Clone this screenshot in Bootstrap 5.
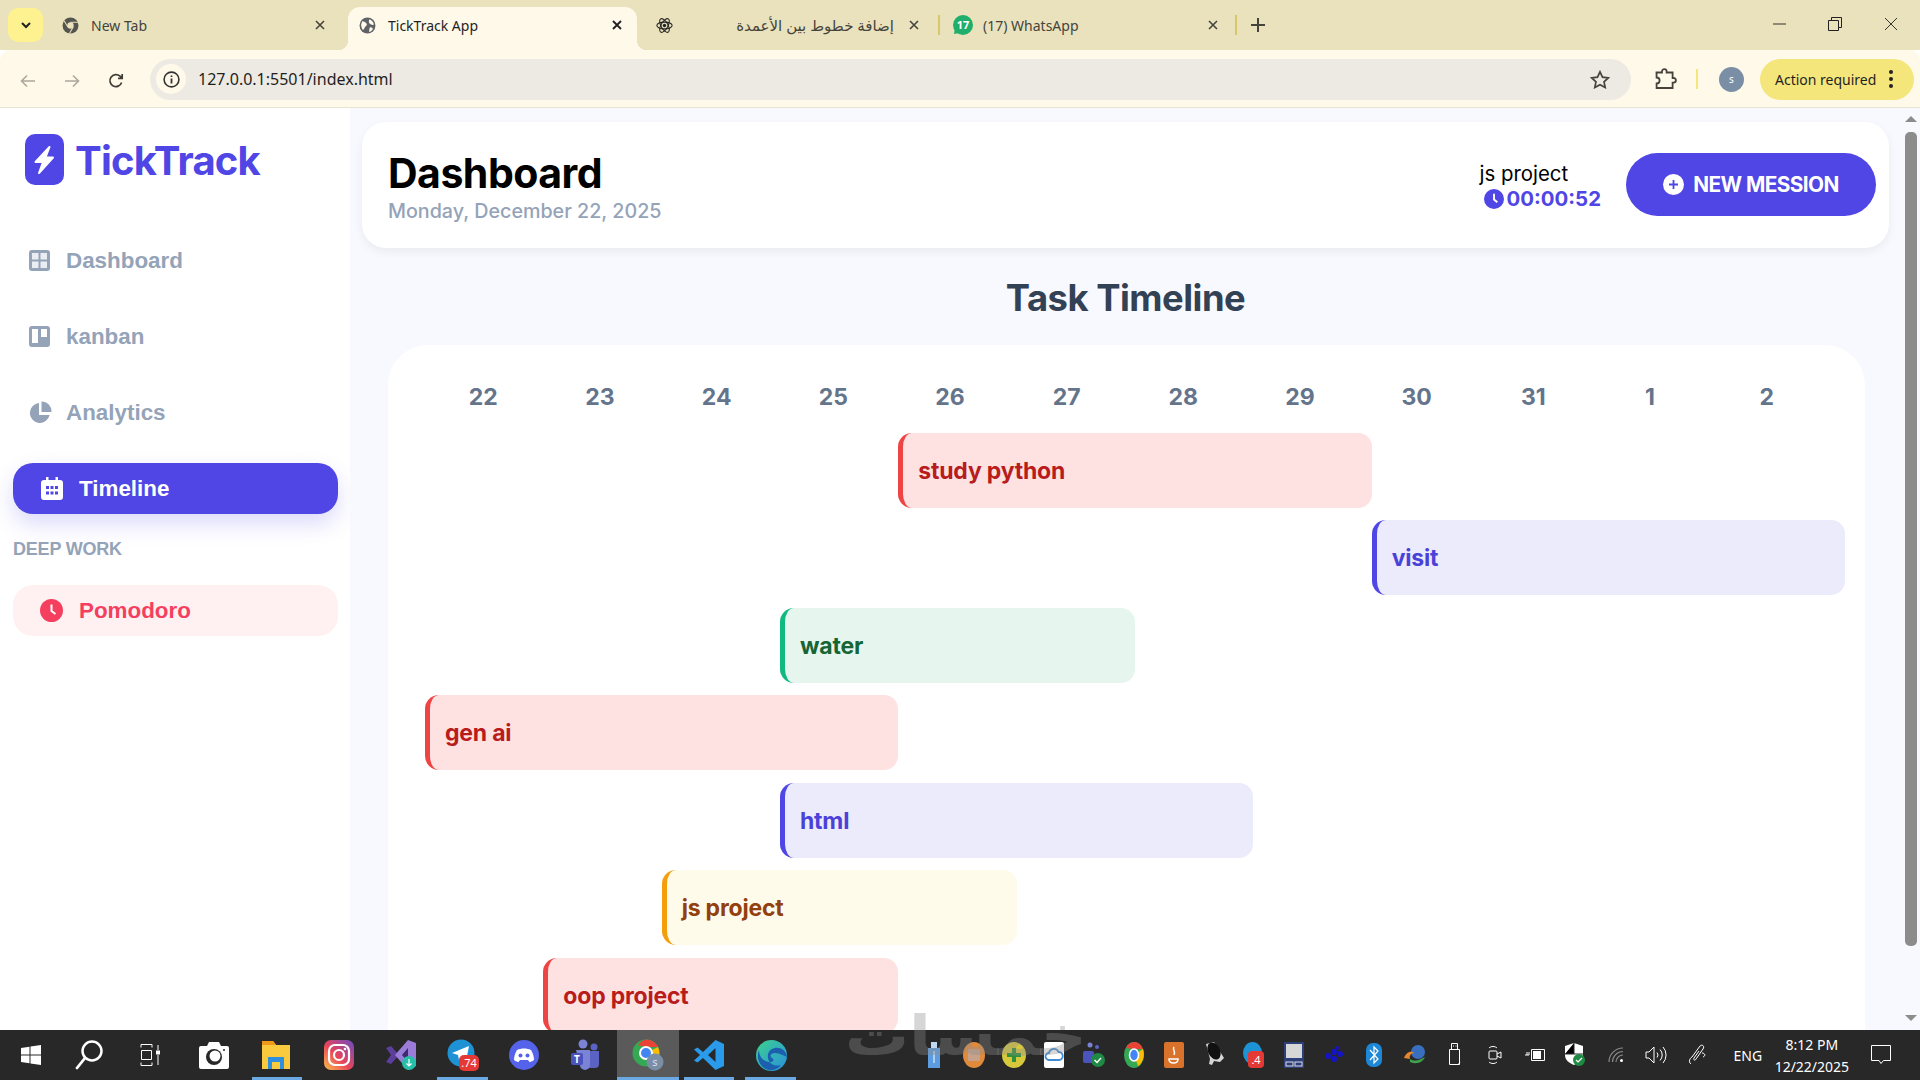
<!DOCTYPE html>
<html lang="en">
  <head>
    <meta charset="UTF-8" />
    <meta name="viewport" content="width=device-width, initial-scale=1.0" />
    <title>TickTrack App</title>
    <link
      rel="stylesheet"
      href="https://cdn.jsdelivr.net/npm/bootstrap@5.3.0/dist/css/bootstrap.min.css"
    />
    <style>
      body { font-family: "Inter", "Noto Sans", sans-serif; background: #fff; position: relative; }

      /* browser chrome */
      .tb-strip { height: 50px; background: #e9e2bc; font-family: "Noto Sans", "DejaVu Sans", sans-serif; font-size: 14px; color: #45443c; padding-left: 8px; }
      .tb-chevron { width: 35px; height: 34px; margin-top: 8px; margin-right: 8px; background: #fdf28f; border-radius: 10px; }
      .tb-tabs { gap: 8px; }
      .tb-tab { width: 289px; height: 43px; margin-top: 7px; padding: 0 10px 7px 11px; position: relative; }
      .tb-tab-on { background: #fff9ea; border-radius: 12px 12px 0 0; color: #1f1f1f; }
      .tb-tab-on::before, .tb-tab-on::after { content: ""; position: absolute; bottom: 0; width: 10px; height: 10px; background: radial-gradient(circle at 0 0, transparent 10px, #fff9ea 10.5px); }
      .tb-tab-on::before { left: -10px; }
      .tb-tab-on::after { right: -10px; background: radial-gradient(circle at 100% 0, transparent 10px, #fff9ea 10.5px); }
      .tb-tab-sep::after { content: ""; position: absolute; right: -6px; top: 8px; width: 2px; height: 20px; background: #d6c868; }
      .tb-fav { width: 17px; height: 17px; flex: none; margin-right: 12px; }
      .tb-fav-wa { width: 20px; height: 20px; margin-right: 10px; }
      .tb-title { flex: 1 1 auto; min-width: 0; white-space: nowrap; overflow: hidden; }
      .tb-title-ar { padding-left: 10px; margin-right: 10px; font-size: 15px; }
      .tb-x { width: 20px; flex: none; }
      .tb-x-wa { margin-right: -2px; }
      .tb-sep { width: 2px; height: 20px; background: #d6c868; margin: 15px 0 0 4px; }
      .tb-plus { margin: 18px 0 0 14px; }
      .tb-win-group { margin-right: 1px; }
      .tb-win { width: 56px; height: 48px; }
      .tb-tools { height: 58px; padding-top: 2px; background: #fff9ea; border-bottom: 1px solid #e8e4d4; border-radius: 10px 10px 0 0; position: relative; font-family: "Noto Sans", sans-serif; }
      .tb-tools-nav { padding-left: 6px; }
      .tb-nav { width: 44px; }
      .tb-omni { width: 1481px; height: 41px; background: #edeae3; border-radius: 21px; font-size: 16px; color: #1f1f1f; margin-left: 12px; padding-left: 6px; padding-right: 21px; }
      .tb-info { width: 30px; height: 30px; border-radius: 50%; background: #fff9ea; margin-right: 12px; }
      .tb-puzzle { margin-left: 23px; }
      .tb-divider { width: 2px; height: 20px; background: #f5e67c; margin: 0 21px 0 18px; }
      .tb-avatar { width: 25px; height: 25px; background: #7a8fa6; color: #fff; border-radius: 50%; font-size: 10px; }
      .tb-action { width: 154px; height: 41px; background: #f5e67c; border-radius: 21px; font-size: 14px; color: #1f1f1f; padding-left: 15px; margin-left: 16px; }
      .tb-action svg { margin-left: 12px; }

      /* sidebar */
      .tt-side { width: 350px; flex: none; padding: 26px 12px 0 13px; background: #fff; font-family: "Liberation Sans", Arial, sans-serif; }
      .tt-logo { margin-left: 12px; margin-bottom: 50px; gap: 11px; height: 51px; }
      .tt-logo span { font-family: "Inter", sans-serif; font-weight: 700; font-size: 40px; color: #4f46e5; letter-spacing: -0.8px; position: relative; top: 2px; }
      .tt-link { height: 51px; margin-bottom: 25px; padding-left: 16px; gap: 16px; border-radius: 20px; color: #94a3b8; font-weight: 700; font-size: 22.4px; text-decoration: none; }
      .tt-link-pie svg { margin-right: -2px; }
      .tt-link-on { background: #4f46e5; color: #fff; padding-left: 28px; box-shadow: 0 10px 22px rgba(79, 70, 229, 0.2); margin-bottom: 21px; }
      .tt-link-red { background: #fff1f2; color: #f43f5e; padding-left: 27px; }
      .tt-group { font-size: 18px; font-weight: 700; color: #94a3b8; line-height: 28px; margin-bottom: 22px; letter-spacing: -0.2px; }

      /* main */
      .tt-main { flex: 1 1 auto; min-width: 0; background: #f8f9fe; padding: 14px 13px 0 12px; overflow: hidden; }
      .tt-head { height: 126px; background: #fff; border-radius: 24px; padding: 0 13px 0 26px; box-shadow: 0 4px 10px rgba(15, 23, 42, 0.06); }
      .tt-headline { padding-top: 2px; }
      .tt-h1 { font-size: 41px; font-weight: 700; color: #000; line-height: 50px; letter-spacing: -0.5px; margin: 0; }
      .tt-date { font-size: 19.7px; font-weight: 500; color: #94a3b8; line-height: 26px; }
      .tt-running { font-size: 20.4px; color: #000; line-height: 26px; margin-right: 25px; padding-top: 3px; }
      .tt-clock { font-weight: 700; color: #4f46e5; font-size: 20.4px; line-height: 24px; gap: 3px; margin-left: 4px; }
      .tt-new { width: 250px; height: 63px; border-radius: 32px; background: #4f46e5; color: #fff; font-weight: 700; font-size: 20.8px; letter-spacing: -0.6px; border: 0; gap: 9px; margin-bottom: 1px; padding-left: 6px; }
      .tt-h2 { font-size: 36.4px; font-weight: 700; color: #334155; text-align: center; line-height: 50px; margin: 25px 0 22px; letter-spacing: -0.5px; }
      .tt-board { margin: 0 24px 0 26px; background: #fff; border-radius: 40px 40px 0 0; padding: 36px 20px 0 37px; }
      .tt-days { display: grid; grid-template-columns: repeat(12, 1fr); padding-right: 20px; margin-bottom: 20px; text-align: center; font-weight: 700; font-size: 23px; line-height: 32px; color: #64748b; }
      .tt-bars { display: grid; grid-template-columns: repeat(12, 1fr); row-gap: 12.5px; grid-auto-rows: 75px; }
      .tt-bar { border-radius: 14px; border-left: 5px solid; padding: 1px 0 0 15px; font-weight: 700; font-size: 23px; display: flex; align-items: center; letter-spacing: -0.2px; }
      .tt-red { background: #fee2e2; border-color: #ef4444; color: #b91c1c; }
      .tt-blue { background: #ebebfb; border-color: #4f46e5; color: #4a41d8; }
      .tt-green { background: #e6f6ef; border-color: #10b981; color: #166534; }
      .tt-amber { background: #fffbeb; border-color: #f59e0b; color: #92400e; }

      .tt-scroll { width: 18px; flex: none; background: #f8f9fe; padding: 0 3px; }
      .tt-scroll i { display: block; width: 0; height: 0; margin: 8px auto 0; border: 6px solid transparent; border-top: 0; border-bottom: 6px solid #8c8c8c; }
      .tt-scroll i.tt-down { margin-top: 69px; border-bottom: 0; border-top: 6px solid #8c8c8c; }
      .tt-thumb { height: 814px; margin: 10px 0 0; background: #8c8c8c; border-radius: 5px; }

      /* taskbar */
      .os-bar { height: 50px; background: #282828; position: relative; z-index: 1; color: #fff; font-family: "Noto Sans", sans-serif; }
      .os-cell { width: 61.7px; height: 50px; flex: none; position: relative; }
      .os-open::after { content: ""; position: absolute; left: 5px; right: 6px; bottom: 0; height: 3px; background: #6aa9e4; }
      .os-cur { background: #5a5a5a; }
      .os-cur::after { left: 0; right: 0; }
      .os-tray { margin-left: 112px; }
      .os-mini { width: 40.05px; height: 50px; flex: none; }
      .os-wifi { margin-left: 1px; }
      .os-lang { font-size: 14px; width: 52px; flex: none; margin-left: 6px; }
      .os-time { font-size: 14px; line-height: 22px; text-align: center; width: 94px; flex: none; margin-left: -9px; padding-top: 2px; }
      .os-note { margin-left: 12px; }

      /* overlay watermark */
      .wm { position: absolute; left: 845px; top: 1006px; z-index: 2; font-family: "DejaVu Sans", sans-serif; font-weight: 700; font-size: 55px; line-height: 60px; color: rgba(140, 140, 140, 0.36); pointer-events: none; transform: scaleX(1.16); transform-origin: 0 50%; }
    </style>
  </head>
  <body class="d-flex flex-column vh-100 overflow-hidden">
    <div class="tb-strip d-flex">
      <div class="tb-chevron d-flex align-items-center justify-content-center">
        <svg width="12" height="8" viewBox="0 0 12 8"><path d="M2 2l4 4 4-4" fill="none" stroke="#222" stroke-width="2"/></svg>
      </div>
      <div class="tb-tabs d-flex">
        <div class="tb-tab d-flex align-items-center">
          <svg class="tb-fav" viewBox="0 0 16 16"><circle cx="8" cy="8" r="7.5" fill="#55554f"/><circle cx="8" cy="8" r="3" fill="#e9e2bc"/><path d="M8 5h7M5.5 9.5L2 3.5M10.5 9.5L7 15.5" stroke="#e9e2bc" stroke-width="1"/></svg>
          <span class="tb-title">New Tab</span>
          <svg class="tb-x" height="10" viewBox="0 0 20 10"><path d="M6 1l8 8M14 1l-8 8" stroke="#45443c" stroke-width="1.6"/></svg>
        </div>
        <div class="tb-tab tb-tab-on d-flex align-items-center">
          <svg class="tb-fav" viewBox="0 0 16 16"><circle cx="8" cy="8" r="7.5" fill="#5f6368"/><path d="M3 4c2 0 3 1 4 2s0 2-1 3-1 3-2 3-2-3-2-5zM10 2c2 1 4 3 4 5-1 1-3 0-4-1s-1-3 0-4zM10 10c1-1 3 0 3 1s-2 3-3 3 0-3 0-4z" fill="#fff9ea"/></svg>
          <span class="tb-title">TickTrack App</span>
          <svg class="tb-x" height="10" viewBox="0 0 20 10"><path d="M6 1l8 8M14 1l-8 8" stroke="#1f1f1f" stroke-width="1.8"/></svg>
        </div>
        <div class="tb-tab tb-tab-sep d-flex align-items-center">
          <svg class="tb-fav" viewBox="0 0 16 16"><g fill="none" stroke="#222" stroke-width="1"><ellipse cx="8" cy="8" rx="7.2" ry="3.2"/><ellipse cx="8" cy="8" rx="7.2" ry="3.2" transform="rotate(60 8 8)"/><ellipse cx="8" cy="8" rx="7.2" ry="3.2" transform="rotate(120 8 8)"/></g><circle cx="8" cy="8" r="1.6" fill="#222"/></svg>
          <span class="tb-title tb-title-ar" dir="rtl">إضافة خطوط بين الأعمدة</span>
          <svg class="tb-x" height="10" viewBox="0 0 20 10"><path d="M6 1l8 8M14 1l-8 8" stroke="#45443c" stroke-width="1.6"/></svg>
        </div>
        <div class="tb-tab d-flex align-items-center">
          <svg class="tb-fav tb-fav-wa" viewBox="0 0 20 20"><circle cx="10" cy="10" r="10" fill="#1fae6b"/><path d="M1 19l1-6 4 5z" fill="#1fae6b"/><text x="10" y="14" text-anchor="middle" font-size="11" font-weight="700" fill="#fff" font-family="Noto Sans">17</text></svg>
          <span class="tb-title">(17) WhatsApp</span>
          <svg class="tb-x tb-x-wa" height="10" viewBox="0 0 20 10"><path d="M6 1l8 8M14 1l-8 8" stroke="#45443c" stroke-width="1.6"/></svg>
        </div>
      </div>
      <div class="tb-sep"></div>
      <svg class="tb-plus" width="14" height="14" viewBox="0 0 14 14"><path d="M7 0v14M0 7h14" stroke="#45443c" stroke-width="2"/></svg>
      <div class="tb-win-group ms-auto d-flex">
        <div class="tb-win d-flex align-items-center justify-content-center"><svg width="13" height="2" viewBox="0 0 13 2"><path d="M0 1h13" stroke="#333"/></svg></div>
        <div class="tb-win d-flex align-items-center justify-content-center"><svg width="14" height="14" viewBox="0 0 14 14"><path d="M.5 3.5h10v10H.5zM3.5 3.5v-3h10v10h-3" fill="none" stroke="#222"/></svg></div>
        <div class="tb-win d-flex align-items-center justify-content-center"><svg width="14" height="14" viewBox="0 0 14 14"><path d="M1 1l12 12M13 1L1 13" stroke="#333"/></svg></div>
      </div>
    </div>

    <div class="tb-tools d-flex align-items-center">
      <div class="tb-tools-nav d-flex align-items-center">
        <div class="tb-nav text-center"><svg width="16" height="14" viewBox="0 0 16 14"><path d="M15 7H2M7 1.5L1.5 7 7 12.5" fill="none" stroke="#aba89c" stroke-width="1.6"/></svg></div>
        <div class="tb-nav text-center"><svg width="16" height="14" viewBox="0 0 16 14"><path d="M1 7h13M9 1.5L14.5 7 9 12.5" fill="none" stroke="#aba89c" stroke-width="1.6"/></svg></div>
        <div class="tb-nav text-center"><svg width="16" height="16" viewBox="0 0 16 16"><path d="M13.6 9.5A6 6 0 1 1 12 3.2L14 5M14.2 1v4.3H10" fill="none" stroke="#3f3e36" stroke-width="1.7"/></svg></div>
      </div>
      <div class="tb-omni d-flex align-items-center">
        <div class="tb-info d-flex align-items-center justify-content-center"><svg width="17" height="17" viewBox="0 0 17 17"><circle cx="8.5" cy="8.5" r="7.4" fill="none" stroke="#333" stroke-width="1.6"/><path d="M8.5 7.5v5M8.5 4.5v1.6" stroke="#333" stroke-width="1.8"/></svg></div>
        <span>127.0.0.1:5501/index.html</span>
        <svg class="ms-auto" width="20" height="19" viewBox="0 0 20 19"><path d="M10 1.8l2.5 5.3 5.8.7-4.3 4 1.2 5.7L10 14.7l-5.2 2.8L6 11.8l-4.3-4 5.8-.7z" fill="none" stroke="#45443c" stroke-width="1.7"/></svg>
      </div>
      <svg class="tb-puzzle" width="24" height="24" viewBox="0 0 24 24"><path d="M2.5 5.5h5.5v-1a2.3 2.3 0 0 1 4.6 0v1h6v5.5h1a2.3 2.3 0 0 1 0 4.6h-1v5.4h-16v-4.500a2.6 2.6 0 0 0 0-6z" fill="none" stroke="#45443c" stroke-width="1.8"/></svg>
      <div class="tb-divider"></div>
      <div class="tb-avatar d-flex align-items-center justify-content-center">s</div>
      <div class="tb-action d-flex align-items-center">
        <span>Action required</span>
        <svg width="6" height="20" viewBox="0 0 6 20"><circle cx="3" cy="3" r="2" fill="#222"/><circle cx="3" cy="10" r="2" fill="#222"/><circle cx="3" cy="17" r="2" fill="#222"/></svg>
      </div>
    </div>

    <div class="d-flex flex-grow-1 overflow-hidden">
      <aside class="tt-side">
        <div class="tt-logo d-flex align-items-center">
          <svg width="39" height="51" viewBox="0 0 39 51"><rect width="39" height="51" rx="10" fill="#4f46e5"/><path d="M24.5 13L10.5 28h7.5L14 39l14-15.5h-7.5z" fill="#fff" stroke="#fff" stroke-width="2" stroke-linejoin="round"/></svg>
          <span>TickTrack</span>
        </div>
        <a class="tt-link d-flex align-items-center" href="#">
          <svg width="21" height="21" viewBox="0 0 21 21"><rect width="21" height="21" rx="3" fill="#94a3b8"/><path d="M3 3h6.5v6.5H3zM11.5 3H18v6.5h-6.5zM3 11.5h6.5V18H3zM11.5 11.5H18V18h-6.5z" fill="#fff" opacity=".8"/></svg>
          Dashboard
        </a>
        <a class="tt-link d-flex align-items-center" href="#">
          <svg width="21" height="21" viewBox="0 0 21 21"><rect width="21" height="21" rx="3" fill="#94a3b8"/><path d="M3 3h6v14H3zM12 3h6v8h-6z" fill="#fff"/></svg>
          kanban
        </a>
        <a class="tt-link tt-link-pie d-flex align-items-center" href="#">
          <svg width="23" height="23" viewBox="0 0 23 23"><path d="M10 2a10 10 0 1 0 10.6 12H10z" fill="#94a3b8"/><path d="M12.5 0.5a10 10 0 0 1 10 10.5h-10z" fill="#94a3b8"/></svg>
          Analytics
        </a>
        <a class="tt-link tt-link-on d-flex align-items-center" href="#">
          <svg width="22" height="23" viewBox="0 0 22 23"><path d="M5 0h2.5v3h7V0H17v3h2a3 3 0 0 1 3 3v14a3 3 0 0 1-3 3H3a3 3 0 0 1-3-3V6a3 3 0 0 1 3-3h2z" fill="#fff"/><g fill="#4f46e5"><rect x="5" y="9" width="3" height="3"/><rect x="9.5" y="9" width="3" height="3"/><rect x="14" y="9" width="3" height="3"/><rect x="5" y="14.500" width="3" height="3"/><rect x="9.5" y="14.500" width="3" height="3"/><rect x="14" y="14.500" width="3" height="3"/></g></svg>
          Timeline
        </a>
        <div class="tt-group">DEEP WORK</div>
        <a class="tt-link tt-link-red d-flex align-items-center" href="#">
          <svg width="23" height="23" viewBox="0 0 23 23"><circle cx="11.500" cy="11.500" r="11.500" fill="#f43f5e"/><path d="M11.500 5.500v6.500l4 3" fill="none" stroke="#fff" stroke-width="2"/></svg>
          Pomodoro
        </a>
      </aside>

      <main class="tt-main">
        <header class="tt-head d-flex align-items-center">
          <div class="tt-headline flex-grow-1">
            <h1 class="tt-h1">Dashboard</h1>
            <div class="tt-date">Monday, December 22, 2025</div>
          </div>
          <div class="tt-running">
            <div>js project</div>
            <div class="tt-clock d-flex align-items-center">
              <svg width="20" height="20" viewBox="0 0 21 21"><circle cx="10.500" cy="10.500" r="10.500" fill="#4f46e5"/><path d="M10.500 5v6l3.500 3" fill="none" stroke="#fff" stroke-width="2"/></svg>
              00:00:52
            </div>
          </div>
          <button class="tt-new d-flex align-items-center justify-content-center" type="button">
            <svg width="21" height="21" viewBox="0 0 21 21"><circle cx="10.500" cy="10.500" r="10.500" fill="#fff"/><path d="M10.500 6v9M6 10.500h9" stroke="#4f46e5" stroke-width="1.800"/></svg>
            NEW MESSION
          </button>
        </header>

        <h2 class="tt-h2">Task Timeline</h2>

        <section class="tt-board">
          <div class="tt-days">
            <div>22</div><div>23</div><div>24</div><div>25</div><div>26</div><div>27</div>
            <div>28</div><div>29</div><div>30</div><div>31</div><div>1</div><div>2</div>
          </div>
          <div class="tt-bars">
            <div class="tt-bar tt-red" style="grid-area: 1 / 5 / auto / span 4">study python</div>
            <div class="tt-bar tt-blue" style="grid-area: 2 / 9 / auto / span 4">visit</div>
            <div class="tt-bar tt-green" style="grid-area: 3 / 4 / auto / span 3">water</div>
            <div class="tt-bar tt-red" style="grid-area: 4 / 1 / auto / span 4">gen ai</div>
            <div class="tt-bar tt-blue" style="grid-area: 5 / 4 / auto / span 4">html</div>
            <div class="tt-bar tt-amber" style="grid-area: 6 / 3 / auto / span 3">js project</div>
            <div class="tt-bar tt-red" style="grid-area: 7 / 2 / auto / span 3">oop project</div>
          </div>
        </section>
      </main>

      <div class="tt-scroll">
        <i></i>
        <div class="tt-thumb"></div>
        <i class="tt-down"></i>
      </div>
    </div>

    <footer class="os-bar d-flex">
      <div class="d-flex">
        <div class="os-cell d-flex align-items-center justify-content-center"><svg width="20" height="20" viewBox="0 0 20 20"><path d="M0 3l8.500-1.200v7.700H0zM9.500 1.600L20 0v9.500H9.500zM0 10.500h8.500v7.700L0 17zM9.500 10.500H20V20L9.500 18.400z" fill="#fff"/></svg></div>
        <div class="os-cell d-flex align-items-center justify-content-center"><svg class="me-2" width="28" height="30" viewBox="0 0 28 30"><circle cx="17" cy="11" r="9.500" fill="none" stroke="#fff" stroke-width="2.500"/><path d="M10 18L2 28" stroke="#fff" stroke-width="2.800" stroke-linecap="round"/></svg></div>
        <div class="os-cell d-flex align-items-center justify-content-center"><svg class="me-2" width="20" height="22" viewBox="0 0 20 22" fill="none" stroke="#fff"><path d="M1 3.500V.5h11v3M1 18.500v3h11v-3M1.500 6.500h10v9h-10zM18 1v5M18 11v10"/><rect x="16.500" y="7" width="3" height="3" fill="#fff"/></svg></div>
        <div class="os-cell d-flex align-items-center justify-content-center"><svg class="me-1" width="30" height="28" viewBox="0 0 30 28"><path d="M2 5h6l2-4h10l2 4h6a2 2 0 0 1 2 2v19a2 2 0 0 1-2 2H2a2 2 0 0 1-2-2V7a2 2 0 0 1 2-2z" fill="#fff"/><circle cx="15" cy="16" r="8" fill="#282828"/><circle cx="16" cy="15" r="5.500" fill="#fff"/><circle cx="25" cy="9" r="1" fill="#282828"/></svg></div>
        <div class="os-cell os-open d-flex align-items-center justify-content-center"><svg class="me-1" width="28" height="28" viewBox="0 0 28 28"><path d="M0 0h11l3 4h14v24H0z" fill="#f9c93e"/><path d="M0 0h11l3 4H0z" fill="#f09a1a"/><path d="M6 16h16v12h-4v-7h-8v7H6z" fill="#2f8fdc"/><rect x="10" y="21" width="8" height="7" fill="#f9c93e"/></svg></div>
        <div class="os-cell d-flex align-items-center justify-content-center"><svg width="30" height="30" viewBox="0 0 30 30"><defs><linearGradient id="ig" x1="0" y1="1" x2="1" y2="0"><stop offset="0" stop-color="#fdc04a"/><stop offset=".45" stop-color="#e8455a"/><stop offset="1" stop-color="#6a4bc5"/></linearGradient></defs><rect width="30" height="30" rx="7" fill="url(#ig)"/><rect x="5" y="5" width="20" height="20" rx="6" fill="none" stroke="#fff" stroke-width="2.200"/><circle cx="15" cy="15" r="5" fill="none" stroke="#fff" stroke-width="2.200"/><circle cx="21" cy="9" r="1.300" fill="#fff"/></svg></div>
        <div class="os-cell d-flex align-items-center justify-content-center"><svg width="30" height="30" viewBox="0 0 30 30"><path d="M0 8l5-2 8 9-8 9-5-2 5-7z" fill="#5c3e9c"/><path d="M22 0l8 3v23l-8 4-13-15z" fill="#9b7dd9"/><path d="M22 8v14l-6-7z" fill="#3d2a70"/><circle cx="23" cy="23" r="7" fill="#26bfa8"/><path d="M23 19v7M20.500 23.500L23 26l2.500-2.500" fill="none" stroke="#fff" stroke-width="1.200"/></svg></div>
        <div class="os-cell os-open d-flex align-items-center justify-content-center"><svg width="34" height="34" viewBox="0 0 34 34"><circle cx="15" cy="15" r="13.500" fill="#1d93d6"/><path d="M6 15L23 8l-3 15-5-4-2 3-1-5z" fill="#fff"/><rect x="13" y="17" width="20" height="16" rx="5" fill="#e53935"/><text x="23" y="29" text-anchor="middle" font-size="11" fill="#fff" font-family="Noto Sans">.74</text></svg></div>
        <div class="os-cell d-flex align-items-center justify-content-center"><svg width="30" height="30" viewBox="0 0 30 30"><circle cx="15" cy="15" r="15" fill="#5562ea"/><path d="M8 10c4-2 10-2 14 0 2 3 3 7 3 10-2 1.500-3.500 2-4.500 2l-1.500-2H11l-1.500 2c-1 0-2.500-.5-4.500-2 0-3 1-7 3-10z" fill="#fff"/><circle cx="11.500" cy="15.500" r="2" fill="#5562ea"/><circle cx="18.500" cy="15.500" r="2" fill="#5562ea"/></svg></div>
        <div class="os-cell d-flex align-items-center justify-content-center"><svg width="30" height="32" viewBox="0 0 30 32"><circle cx="12" cy="5" r="4.500" fill="#7b83d6"/><circle cx="23" cy="8" r="3.500" fill="#5a62c4"/><path d="M17 12h11v13a4 4 0 0 1-4 4h-7z" fill="#5a62c4"/><path d="M5 11h14v15a5 5 0 0 1-10 0z" fill="#7b83d6"/><rect x="0" y="14" width="12" height="12" rx="2" fill="#4b53bc"/><text x="6" y="24" text-anchor="middle" font-size="10" font-weight="700" fill="#fff" font-family="Noto Sans">T</text></svg></div>
        <div class="os-cell os-cur os-open d-flex align-items-center justify-content-center"><svg width="32" height="32" viewBox="0 0 32 32"><circle cx="14" cy="14" r="13.500" fill="#34a853"/><path d="M14 .5A13.500 13.500 0 0 1 26 8H14L6 6A13.500 13.500 0 0 1 14 .5z" fill="#ea4335"/><path d="M26 8a13.500 13.500 0 0 1-6 18l-6-12z" fill="#fbbc05"/><circle cx="14" cy="14" r="6" fill="#4285f4" stroke="#fff" stroke-width="2"/><circle cx="23" cy="23" r="8.500" fill="#7a8fa6"/><text x="23" y="27" text-anchor="middle" font-size="11" fill="#dde" font-family="Noto Sans">s</text></svg></div>
        <div class="os-cell os-open d-flex align-items-center justify-content-center"><svg width="30" height="30" viewBox="0 0 30 30"><path d="M21.500 0L30 4v22l-8.500 4L9 18l-5.500 4.500L0 20.500 6 15 0 9.500 3.500 7.500 9 12zM21.500 8L14 15l7.500 7z" fill="#2a9bea"/></svg></div>
        <div class="os-cell os-open d-flex align-items-center justify-content-center"><svg width="31" height="31" viewBox="0 0 31 31"><defs><linearGradient id="edg" x1="0" y1="0" x2="1" y2="1"><stop offset="0" stop-color="#3bd38c"/><stop offset="1" stop-color="#2a8fe0"/></linearGradient></defs><circle cx="15.500" cy="15.500" r="15.500" fill="url(#edg)"/><path d="M31 17c-1-7-7-10-12-9-5 1-8 5-7 10 1 6 7 9 13 7-4 5-11 7-17 3C3 24 0 17 3 10c0 8 6 13 12 12 3 0 3-3 1-4-3-2-1-5 3-5 5 0 9 3 12 4z" fill="#1b5fae"/></svg></div>
      </div>

      <div class="os-tray d-flex align-items-center">
        <div class="os-mini d-flex align-items-center justify-content-center"><svg width="12" height="26" viewBox="0 0 12 26"><path d="M3 0h6v6H3z" fill="#bfd9f2"/><path d="M0 6h12v20H0z" fill="#5c9ce0"/><path d="M6 9v12" stroke="#fff"/></svg></div>
        <div class="os-mini d-flex align-items-center justify-content-center"><svg width="22" height="26" viewBox="0 0 22 26"><ellipse cx="11" cy="13" rx="11" ry="13" fill="#e08a3c"/><rect x="5" y="7" width="12" height="12" fill="#c7a18a"/></svg></div>
        <div class="os-mini d-flex align-items-center justify-content-center"><svg width="24" height="26" viewBox="0 0 24 26"><ellipse cx="12" cy="13" rx="12" ry="13" fill="#d8c93c"/><path d="M12 6v14M5 13h14" stroke="#2f8f3a" stroke-width="4"/></svg></div>
        <div class="os-mini d-flex align-items-center justify-content-center"><svg width="20" height="26" viewBox="0 0 20 26"><rect width="20" height="26" rx="2" fill="#fff"/><path d="M5 18a3.500 3.500 0 0 1 0-7 5 5 0 0 1 9.500-1A4 4 0 0 1 15 18z" fill="none" stroke="#3f8bd6" stroke-width="1.800"/></svg></div>
        <div class="os-mini d-flex align-items-center justify-content-center"><svg width="22" height="26" viewBox="0 0 22 26"><circle cx="7" cy="3" r="2.500" fill="#7b83d6"/><circle cx="14" cy="5" r="2" fill="#5a62c4"/><rect x="0" y="9" width="11" height="12" rx="2" fill="#4b53bc"/><circle cx="15" cy="18" r="7" fill="#1e8a44"/><path d="M11.500 18l2.500 2.500 4-4.500" fill="none" stroke="#fff" stroke-width="1.500"/></svg></div>
        <div class="os-mini d-flex align-items-center justify-content-center"><svg width="20" height="26" viewBox="0 0 20 26"><ellipse cx="10" cy="13" rx="10" ry="13" fill="#34a853"/><path d="M10 0a10 13 0 0 1 9 7H10L2 6a10 13 0 0 1 8-6z" fill="#ea4335"/><path d="M19 7a10 13 0 0 1-5 17L10 13z" fill="#fbbc05"/><ellipse cx="10" cy="13" rx="4.500" ry="6" fill="#4285f4" stroke="#fff" stroke-width="1.500"/></svg></div>
        <div class="os-mini d-flex align-items-center justify-content-center"><svg width="20" height="26" viewBox="0 0 20 26"><rect width="20" height="26" rx="2" fill="#d9722a"/><path d="M5 17h9c0 3-2 4-4.500 4S5 20 5 17zM10 5c-2 3 2 4 0 8" fill="none" stroke="#fff" stroke-width="1.500"/></svg></div>
        <div class="os-mini d-flex align-items-center justify-content-center"><svg width="20" height="26" viewBox="0 0 20 26"><path d="M2 2l8-2 10 16-4 4-6-1-2 4-3-1 1-5z" fill="#d5d5d5"/><ellipse cx="10" cy="9" rx="6" ry="9" transform="rotate(-25 10 9)" fill="#111"/></svg></div>
        <div class="os-mini d-flex align-items-center justify-content-center"><svg width="22" height="26" viewBox="0 0 22 26"><ellipse cx="9.500" cy="11" rx="9.500" ry="11" fill="#1d93d6"/><rect x="5" y="9" width="16" height="17" rx="4" fill="#e53935"/><text x="13" y="22" text-anchor="middle" font-size="11" fill="#fff" font-family="Noto Sans">.4</text></svg></div>
        <div class="os-mini d-flex align-items-center justify-content-center"><svg width="20" height="26" viewBox="0 0 20 26"><rect width="20" height="26" fill="#2c3f7a"/><rect x="2" y="2" width="16" height="14" fill="#d6d6d6"/><rect x="2" y="20" width="7" height="4" fill="none" stroke="#ddd"/><rect x="11" y="20" width="7" height="4" fill="none" stroke="#ddd"/></svg></div>
        <div class="os-mini d-flex align-items-center justify-content-center"><svg width="20" height="20" viewBox="0 0 20 20" fill="#1313c7"><circle cx="4" cy="11" r="3"/><circle cx="10" cy="7" r="3"/><circle cx="16" cy="9" r="3"/><circle cx="10" cy="14" r="3"/><circle cx="13" cy="3" r="2"/></svg></div>
        <div class="os-mini d-flex align-items-center justify-content-center"><svg width="16" height="24" viewBox="0 0 16 24"><rect width="16" height="24" rx="7" fill="#1e88d8"/><path d="M4 7l8 9-4 4V4l4 4-8 9" fill="none" stroke="#fff" stroke-width="1.200"/></svg></div>
        <div class="os-mini d-flex align-items-center justify-content-center"><svg width="22" height="20" viewBox="0 0 22 20"><circle cx="14" cy="7" r="7" fill="#3a6fc0"/><path d="M0 13c3-7 8-7 10-5-3 0-5 3-4 6z" fill="#e8862c"/><path d="M6 14c5 3 10 1 15-2-2 5-8 8-15 5z" fill="#3fa34d"/></svg></div>
        <div class="os-mini d-flex align-items-center justify-content-center"><svg width="16" height="24" viewBox="0 0 16 24" fill="none" stroke="#fff"><path d="M4.500 .5h6v6h-6zM2.500 6.500h10v15h-10z"/><path d="M6 3h1M8.500 3h1M11 22l2-3"/></svg></div>
        <div class="os-mini d-flex align-items-center justify-content-center"><svg width="16" height="20" viewBox="0 0 16 20" fill="none" stroke="#fff"><rect x="2" y="6" width="8" height="8" rx="1"/><path d="M10 9l4-2v6l-4-2M2 3c2-2 6-2 8 0M2 17c2 2 6 2 8 0"/></svg></div>
        <div class="os-mini d-flex align-items-center justify-content-center"><svg width="20" height="14" viewBox="0 0 20 14"><path d="M6.500 1.500h13v11h-13z" fill="none" stroke="#fff"/><rect x="8" y="3" width="8" height="8" fill="#fff"/><path d="M0 7h4M2 4v3M4 4v3" stroke="#fff"/></svg></div>
        <div class="os-mini d-flex align-items-center justify-content-center"><svg width="20" height="24" viewBox="0 0 20 24"><path d="M9 0l9 3v9c0 5-4 8-9 10-5-2-9-5-9-10V3z" fill="#fff"/><path d="M9 0v11H0M9 11h9" stroke="#282828"/><circle cx="14" cy="17" r="6" fill="#1e8a44"/><path d="M11 17l2 2 4-4" fill="none" stroke="#fff" stroke-width="1.200"/></svg></div>
        <div class="os-mini os-wifi d-flex align-items-center justify-content-center"><svg width="16" height="16" viewBox="0 0 16 16" fill="none" stroke="#8a8a8a" stroke-width="1.200"><path d="M1 15A14 14 0 0 1 15 1M4.500 15A10.500 10.500 0 0 1 15 4.500M8 15a7 7 0 0 1 7-7"/><circle cx="13.500" cy="13.500" r="1.500" fill="#fff" stroke="none"/></svg></div>
        <div class="os-mini d-flex align-items-center justify-content-center"><svg width="22" height="18" viewBox="0 0 22 18" fill="none" stroke="#fff"><path d="M1 6h3l5-5v16l-5-5H1zM12 6.500a4 4 0 0 1 0 5M15 3.500a8 8 0 0 1 0 11M18 1a12 12 0 0 1 0 16"/></svg></div>
        <div class="os-mini d-flex align-items-center justify-content-center"><svg class="ms-1" width="20" height="22" viewBox="0 0 20 22" fill="none" stroke="#fff"><path d="M3 20c-3-2-1-6 1-7l8-11c2-2 5 0 3 3L8 15c-1 2-3 1-2-1l5-7M14 9c3 0 4 3 1 4"/></svg></div>
        <div class="os-lang d-flex align-items-center justify-content-center">ENG</div>
        <div class="os-time"><div>8:12 PM</div><div>12/22/2025</div></div>
        <svg class="os-note" width="20" height="20" viewBox="0 0 20 20"><path d="M.5.5h19v15h-7L10 18.500 8 15.500H.5z" fill="none" stroke="#fff"/></svg>
      </div>
    </footer>

    <div class="wm" dir="rtl">خمسات</div>

    <script src="https://cdn.jsdelivr.net/npm/bootstrap@5.3.0/dist/js/bootstrap.bundle.min.js"></script>
  </body>
</html>
